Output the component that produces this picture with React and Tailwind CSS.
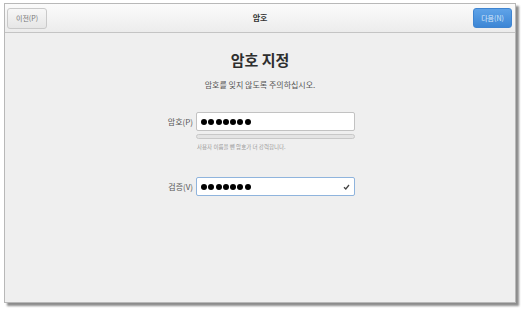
function Dots() {
  return (
    <div className="flex items-center gap-[1.3px]">
      {[0, 1, 2, 3, 4, 5, 6].map((i) => (
        <span key={i} className="w-[6px] h-[6px] rounded-full bg-black"></span>
      ))}
    </div>
  );
}

export default function App() {
  const font = { fontFamily: '"Noto Sans CJK KR", "Noto Sans", sans-serif' };
  return (
    <div className="w-[525px] h-[315px] bg-white relative overflow-hidden" style={font}>
      <div className="absolute left-[4px] top-[3px] w-[512px] h-[300px] bg-[#efefef] border border-[#b8b8b8] shadow-[3px_3px_2px_rgba(0,0,0,0.45)] flex flex-col">
        <div className="h-[29px] shrink-0 bg-gradient-to-b from-[#fbfbfb] to-[#ececec] border-b border-[#c4c4c4] flex items-center justify-between px-[2px]">
          <div className="w-[40px] h-[21px] rounded-[3px] border border-[#c9c9c9] bg-gradient-to-b from-[#f7f7f7] to-[#e6e6e6] flex items-center justify-center text-[7px] text-[#777]">이전(P)</div>
          <div className="text-[8px] font-bold text-[#333]">암호</div>
          <div className="w-[39px] h-[20px] rounded-[3px] border border-[#3f84d0] bg-gradient-to-b from-[#5fa3e8] to-[#3c86d5] flex items-center justify-center text-[7px] text-[#d8e8fa] mr-[1px]">다음(N)</div>
        </div>
        <div className="flex flex-col items-center">
          <div className="mt-[17px] text-[15px] font-bold text-[#2e2e2e] leading-[20px]">암호 지정</div>
          <div className="mt-[9px] text-[8px] text-[#555] leading-[12px]">암호를 잊지 않도록 주의하십시오.</div>
        </div>
        <div className="mt-[21px] ml-[155px] flex flex-col">
          <div className="flex items-center">
            <div className="w-[36px] text-right pr-[3px] text-[8px] text-[#555]">암호(P)</div>
            <div className="w-[159px] h-[19px] bg-white border border-[#c2c2c2] rounded-[2px] flex items-center pl-[4px]">
              <Dots />
            </div>
          </div>
          <div className="ml-[36px] mt-[3px] w-[159px] h-[5px] rounded-full border border-[#c8c8c8] bg-[#e4e4e4]"></div>
          <div className="ml-[37px] mt-[4px] text-[5.5px] text-[#999] leading-[8px]">사용자 이름을 뺀 암호가 더 강력합니다.</div>
          <div className="flex items-center mt-[26px]">
            <div className="w-[36px] text-right pr-[3px] text-[8px] text-[#555]">검증(V)</div>
            <div className="w-[159px] h-[19px] bg-white border border-[#8fb4dd] rounded-[2px] flex items-center justify-between pl-[4px] pr-[4px]">
              <Dots />
              <svg width="7" height="6" viewBox="0 0 7 6"><path d="M1 3.2 L2.8 5 L6 1" stroke="#444" strokeWidth="1.3" fill="none" /></svg>
            </div>
          </div>
        </div>
      </div>
    </div>
  );
}
